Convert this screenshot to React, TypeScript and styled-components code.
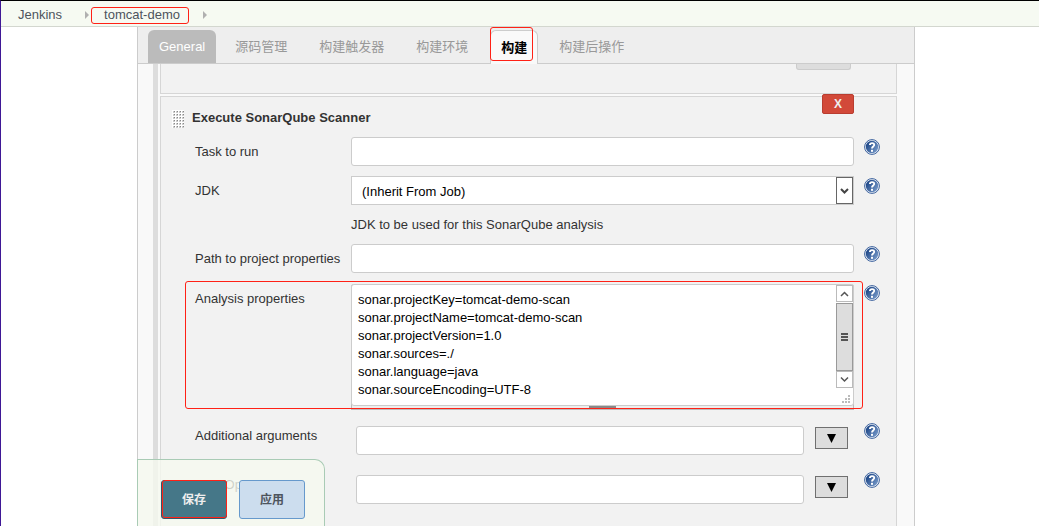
import React from 'react';
import styled, { createGlobalStyle, css } from 'styled-components';

const Global = createGlobalStyle`
  * { box-sizing: border-box; }
  body {
    margin: 0;
    background: #fff;
    color: #333;
    font: 13px/18px "Liberation Sans", "Noto Sans CJK SC", sans-serif;
  }
  input, select, textarea, button { font: inherit; margin: 0; }
`;

const Page = styled.div`
  display: flex;
  flex-direction: column;
  min-height: 100vh;
  border-top: 1px solid #000;
  border-left: 1px solid #3f1896;
`;

const Breadcrumbs = styled.nav`
  display: flex;
  align-items: center;
  height: 26px;
  padding: 2px 0 0 17px;
  background: #f6faf2;
  border-bottom: 1px solid #d3d7cf;
`;

const Crumb = styled.a`
  position: relative;
  color: #4d545d;
  text-decoration: none;
`;

const Separator = styled.svg<{ $before: number; $after: number }>`
  width: 4px;
  height: 8px;
  margin: 0 ${p => p.$after}px 0 ${p => p.$before}px;
`;

const Mark = styled.span<{ $inset: string }>`
  position: absolute;
  inset: ${p => p.$inset};
  border: 1px solid #ff2116;
  border-radius: 3px;
  pointer-events: none;
`;

const Main = styled.main`
  flex: 1;
  display: flex;
  flex-direction: column;
  margin: 0 124px 0 136px;
  background: #f9f9f9;
  border: solid #ccc;
  border-width: 0 1px;
`;

const Tabs = styled.div`
  display: flex;
  align-items: flex-end;
  gap: 12px;
  height: 37px;
  padding: 0 10px;
  background: #eee;
  border-bottom: 1px solid #ccc;
`;

const Tab = styled.button<{ $kind?: 'filled' | 'active' }>`
  position: relative;
  height: 33px;
  padding: 1px 10px 0;
  border: 0;
  border-radius: 6px 6px 0 0;
  background: none;
  color: #999;
  white-space: nowrap;
  ${p => p.$kind === 'filled' && css`
    background: #bbb;
    color: #fff;
    padding: 1px 11px 0;
    margin-right: -3px;
  `}
  ${p => p.$kind === 'active' && css`
    background: #f9f9f9;
    color: #000;
    font-weight: bold;
    border: 1px solid #ccc;
    border-bottom: 0;
    margin: 0 -1px -1px 0;
    padding-top: 0;
    height: 34px;
  `}
`;

const Body = styled.div`
  flex: 1;
  display: flex;
  flex-direction: column;
  gap: 2px;
  margin-left: 15px;
  padding: 0 17px 0 2px;
  border-left: 5px solid #ddd;
`;

const PreviousStep = styled.section`
  display: flex;
  justify-content: flex-end;
  align-items: flex-start;
  height: 30px;
  padding-right: 45px;
  background: #f2f2f2;
  border: 1px solid #d6d6d6;
  border-top: 0;
`;

const AdvancedButton = styled.button`
  width: 55px;
  height: 6px;
  padding: 0;
  background: #ddd;
  border: 1px solid #ccc;
  border-top: 0;
  border-radius: 0 0 3px 3px;
`;

const Step = styled.section`
  position: relative;
  flex: 1;
  padding: 11px 0 22px;
  background: #f2f2f2;
  border: 1px solid #d6d6d6;
  border-bottom: 0;
`;

const StepHeader = styled.header`
  display: flex;
  gap: 8px;
  height: 29px;
  padding-left: 11px;
`;

const Grip = styled.svg`
  width: 12px;
  height: 18px;
  margin-top: 2px;
`;

const StepTitle = styled.h2`
  margin: 0;
  font-size: 13px;
  line-height: 20px;
`;

const DeleteButton = styled.button`
  position: absolute;
  top: -3px;
  right: 42px;
  width: 32px;
  height: 20px;
  padding: 0;
  background: #d24939;
  border: 1px solid #b93d30;
  border-radius: 2px;
  color: #eee;
  font-size: 12px;
  font-weight: bold;
  line-height: 18px;
`;

const Form = styled.form`
  display: flex;
  flex-direction: column;
`;

const Row = styled.div<{ $gap?: number; $labelTop?: number }>`
  position: relative;
  display: grid;
  grid-template-columns: 156px 1fr 42px;
  align-items: start;
  padding-left: 34px;
  margin-bottom: ${p => p.$gap ?? 10}px;
  > label { padding-top: ${p => p.$labelTop ?? 6}px; white-space: nowrap; }
`;

const fieldBox = css`
  width: 100%;
  height: 29px;
  background: #fff;
  border: 1px solid #ccc;
  border-radius: 3px;
  color: #000;
`;

const TextInput = styled.input`
  ${fieldBox}
  padding: 0 6px;
`;

const SelectBox = styled.div`
  position: relative;
`;

const Select = styled.select`
  ${fieldBox}
  appearance: none;
  padding: 2px 24px 0 10px;
  border-radius: 0;
`;

const SelectArrow = styled.svg`
  position: absolute;
  top: 1px;
  right: 1px;
  width: 17px;
  height: 27px;
  pointer-events: none;
`;

const Hint = styled.p`
  margin: 0;
  padding-top: 1px;
  grid-column: 2;
`;

const AreaFrame = styled.div`
  height: 126px;
  border: solid #bbb;
  border-width: 0 1px 1px;
  border-radius: 3px 3px 0 0;
  display: flex;
  flex-direction: column;
  align-items: center;
  background: #eee;
`;

const AreaBox = styled.div`
  display: flex;
  align-self: stretch;
  height: 122px;
  margin: 0 -1px;
  background: #fff;
  border: 1px solid #ccc;
  border-radius: 3px;
`;

const TextArea = styled.textarea`
  flex: 1;
  min-width: 0;
  padding: 6px 6px 0;
  border: 0;
  background: none;
  color: #000;
  resize: none;
  overflow: hidden;
  outline: 0;
`;

const ScrollBar = styled.svg`
  width: 17px;
  height: 120px;
`;

const ResizeHandle = styled.div`
  width: 27px;
  height: 3px;
  background: #888;
`;

const ExpandRow = styled.div`
  display: flex;
  align-items: flex-start;
  gap: 11px;
  padding: 0 6px 0 5px;
`;

const ExpandButton = styled.button`
  flex: none;
  display: grid;
  place-items: center;
  width: 33px;
  height: 22px;
  margin-top: 1px;
  padding: 0;
  background: #ddd;
  border: 1px solid #707070;
`;

const HelpButton = styled.button<{ $top?: number }>`
  display: block;
  width: 16px;
  height: 16px;
  margin: ${p => p.$top ?? 2}px 0 0 10px;
  padding: 0;
  border: 0;
  background: none;
  svg { display: block; }
`;

const SaveBar = styled.div`
  position: fixed;
  left: 137px;
  bottom: 0;
  display: flex;
  gap: 12px;
  height: 67px;
  padding: 20px 19px 0 23px;
  background: rgba(245, 249, 239, 0.8);
  border: solid #a9cbb5;
  border-width: 1px 1px 0 1px;
  border-radius: 0 10px 0 0;
`;

const ActionButton = styled.button<{ $primary?: boolean }>`
  position: relative;
  width: 66px;
  height: 39px;
  padding: 0;
  border: 1px solid ${p => (p.$primary ? '#33586a' : '#6699cc')};
  border-radius: 3px;
  background: ${p => (p.$primary ? '#457788' : '#ccddee')};
  color: ${p => (p.$primary ? '#eee' : '#4d545d')};
  font-size: 12px;
  font-weight: bold;
`;

const HelpIcon = () => (
  <svg width="16" height="16" viewBox="0 0 16 16">
    <defs>
      <linearGradient id="help" x1="0" y1="0.2" x2="1" y2="0.9">
        <stop offset="0.1" stopColor="#214a8a" />
        <stop offset="1" stopColor="#7d9fcd" />
      </linearGradient>
    </defs>
    <circle cx="8" cy="8" r="7.4" fill="#f4f7fb" stroke="#3a609c" />
    <circle cx="8" cy="8" r="6.2" fill="url(#help)" />
    <path d="M5.9 6.1C5.9 3.5 10.3 3.5 10.2 6C10.1 7.5 8 7.7 8 9.6" fill="none" stroke="#fff" strokeWidth="1.9" />
    <rect x="7" y="10.8" width="2" height="2" fill="#fff" />
  </svg>
);

const Help = ({ top }: { top?: number }) => (
  <HelpButton type="button" aria-label="Help" $top={top}><HelpIcon /></HelpButton>
);

const Arrow = ({ before, after }: { before: number; after: number }) => (
  <Separator $before={before} $after={after} viewBox="0 0 4 8"><path d="M0 0L4 4L0 8Z" fill="#b0b0b0" /></Separator>
);

const properties = [
  'sonar.projectKey=tomcat-demo-scan',
  'sonar.projectName=tomcat-demo-scan',
  'sonar.projectVersion=1.0',
  'sonar.sources=./',
  'sonar.language=java',
  'sonar.sourceEncoding=UTF-8',
].join('\n');

const Expandable = ({ id }: { id: string }) => (
  <ExpandRow>
    <TextInput id={id} />
    <ExpandButton type="button" aria-label="Expand">
      <svg width="9" height="9" viewBox="0 0 9 9"><path d="M0 0H9L4.5 9Z" fill="#000" /></svg>
    </ExpandButton>
  </ExpandRow>
);

const gripDots = [0, 1, 2, 3].flatMap(x => [0, 1, 2, 3, 4, 5].map(y => [x * 3, y * 3]));

export default function App() {
  return (
    <>
      <Global />
      <Page>
        <Breadcrumbs>
          <Crumb href="#">Jenkins</Crumb>
          <Arrow before={23} after={15} />
          <Crumb href="#">tomcat-demo<Mark $inset="1px -9px 0 -13px" /></Crumb>
          <Arrow before={23} after={0} />
        </Breadcrumbs>
        <Main>
          <Tabs>
            <Tab $kind="filled">General</Tab>
            <Tab>源码管理</Tab>
            <Tab>构建触发器</Tab>
            <Tab>构建环境</Tab>
            <Tab $kind="active">构建<Mark $inset="-4px 4px 3px -1px" /></Tab>
            <Tab>构建后操作</Tab>
          </Tabs>
          <Body>
            <PreviousStep><AdvancedButton aria-label="Advanced" /></PreviousStep>
            <Step>
              <DeleteButton>X</DeleteButton>
              <StepHeader>
                <Grip viewBox="0 0 12 18">
                  <rect width="12" height="18" fill="#fff" />
                  {gripDots.map(([x, y]) => (
                    <g key={`${x}-${y}`}>
                      <rect x={x + 1} y={y + 1} width="2" height="2" fill="#ccc" />
                      <rect x={x + 2} y={y + 1} width="1" height="1" fill="#888" />
                    </g>
                  ))}
                </Grip>
                <StepTitle>Execute SonarQube Scanner</StepTitle>
              </StepHeader>
              <Form>
                <Row>
                  <label htmlFor="task">Task to run</label>
                  <TextInput id="task" />
                  <Help />
                </Row>
                <Row>
                  <label htmlFor="jdk">JDK</label>
                  <SelectBox>
                    <Select id="jdk"><option>(Inherit From Job)</option></Select>
                    <SelectArrow viewBox="0 0 17 27">
                      <rect x="0.5" y="0.5" width="16" height="26" fill="#fff" stroke="#666" />
                      <path d="M5 12L8.5 15.5L12 12" fill="none" stroke="#444" strokeWidth="2" />
                    </SelectArrow>
                  </SelectBox>
                  <Help />
                </Row>
                <Row><Hint>JDK to be used for this SonarQube analysis</Hint></Row>
                <Row $gap={11}>
                  <label htmlFor="path">Path to project properties</label>
                  <TextInput id="path" />
                  <Help />
                </Row>
                <Row $gap={16}>
                  <label htmlFor="props">Analysis properties</label>
                  <AreaFrame>
                    <AreaBox>
                      <TextArea id="props" defaultValue={properties} />
                      <ScrollBar viewBox="0 0 17 120">
                        <rect x="0.5" y="0.5" width="16" height="16" fill="#fff" stroke="#bbb" />
                        <path d="M5 11L8.5 7.5L12 11" fill="none" stroke="#555" strokeWidth="1.5" />
                        <rect x="0.5" y="18.5" width="16" height="67" fill="#ddd" stroke="#999" />
                        <path d="M5 49h7M5 52h7M5 55h7" stroke="#555" strokeWidth="2" />
                        <rect x="0.5" y="86.5" width="16" height="16" fill="#fff" stroke="#bbb" />
                        <path d="M5 92.5L8.5 96L12 92.5" fill="none" stroke="#555" strokeWidth="1.5" />
                        <path d="M12 110h2v2h-2zM9 113h2v2h-2zM12 113h2v2h-2zM6 116h2v2h-2zM9 116h2v2h-2zM12 116h2v2h-2z" fill="#bbb" />
                      </ScrollBar>
                    </AreaBox>
                    <ResizeHandle />
                  </AreaFrame>
                  <Help top={1} />
                  <Mark $inset="-3px 33px 1px 24px" />
                </Row>
                <Row $gap={20} $labelTop={1}>
                  <label htmlFor="args">Additional arguments</label>
                  <Expandable id="args" />
                  <Help top={-3} />
                </Row>
                <Row $gap={0} $labelTop={1}>
                  <label htmlFor="jvm">JVM Options</label>
                  <Expandable id="jvm" />
                  <Help top={-3} />
                </Row>
              </Form>
            </Step>
          </Body>
        </Main>
        <SaveBar>
          <ActionButton $primary>保存<Mark $inset="-1px -1px 0 0" /></ActionButton>
          <ActionButton>应用</ActionButton>
        </SaveBar>
      </Page>
    </>
  );
}
